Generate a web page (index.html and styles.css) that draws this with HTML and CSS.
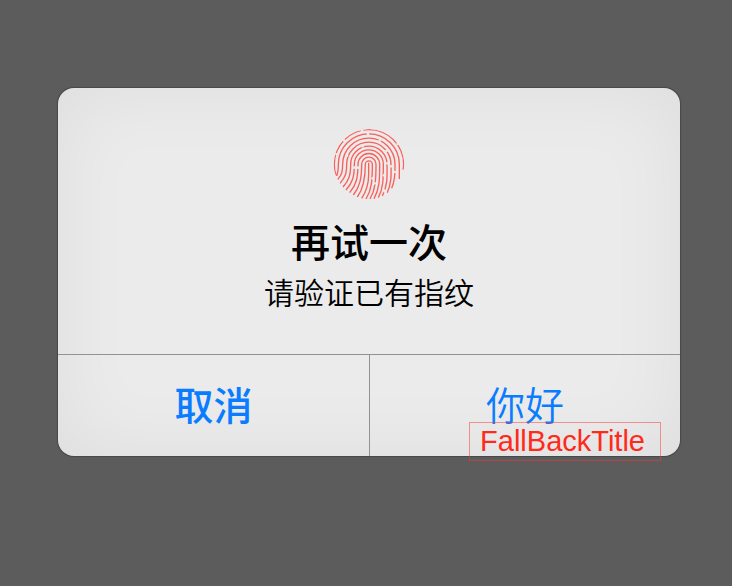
FILE: index.html
```html
<!DOCTYPE html>
<html lang="zh-CN">
<head>
<meta charset="utf-8">
<meta name="viewport" content="width=device-width, initial-scale=1">
<title>再试一次</title>
<link rel="stylesheet" href="styles.css">
</head>
<body>
<main class="dialog" role="alertdialog" aria-labelledby="title" aria-describedby="message">
  <section class="content">
    <svg class="fingerprint" viewBox="0 0 270 270" aria-hidden="true">
      <mask id="breaks" maskUnits="userSpaceOnUse" x="0" y="0" width="270" height="270">
        <circle cx="135" cy="133" r="106" fill="#fff"/>
        <g fill="#000">
          <circle cx="114" cy="31" r="4"/><circle cx="132" cy="42" r="4"/>
          <circle cx="60" cy="61" r="4"/><circle cx="38" cy="103" r="4"/>
          <circle cx="116" cy="79" r="4"/><circle cx="69" cy="107" r="4"/>
          <circle cx="167" cy="62" r="4"/><circle cx="221" cy="72" r="4"/>
          <circle cx="187" cy="93" r="4"/><circle cx="228" cy="104" r="4"/>
          <circle cx="190" cy="130" r="4"/><circle cx="201" cy="139" r="4"/>
          <circle cx="213" cy="156" r="4"/><circle cx="180" cy="166" r="4"/>
          <circle cx="146" cy="175" r="4"/><circle cx="152" cy="190" r="4"/>
          <circle cx="91" cy="143" r="4"/><circle cx="102" cy="143" r="4"/>
          <circle cx="182" cy="213" r="5"/>
        </g>
      </mask>
      <g mask="url(#breaks)" fill="none" stroke="#fb5f59" stroke-width="4">
        <path d="M37 167Q30 151 31 133A104 104 0 0 1 239 133Q239 142 237 149"/>
        <path d="M38 168Q43 155 43 133A91 91 0 0 1 226 133V177"/>
        <path d="M41 179C53 164 56 156 56 133A78 78 0 0 1 213 133C214 160 214 180 203 205"/>
        <path d="M48 190C64 171 68 161 68 133A66 66 0 0 1 201 133C202 168 202 190 190 218"/>
        <path d="M57 201C75 180 80 166 80 133A54 54 0 0 1 189 133C190 174 190 199 175 228"/>
        <path d="M66 210C86 188 91 170 91 133A43 43 0 0 1 178 133C178 178 178 204 163 233"/>
        <path d="M77 218C97 195 102 172 102 133A32 32 0 0 1 167 133C167 178 167 206 150 236"/>
        <path d="M88 225C108 200 113 174 113 133A21 21 0 0 1 156 133C156 178 155 207 138 237"/>
        <path d="M100 231C119 206 124 176 124 133A10 10 0 0 1 145 133C145 178 144 207 126 237"/>
        <path d="M134 128V163C134 188 129 212 113 235"/>
      </g>
    </svg>
    <h1 class="title" id="title">再试一次</h1>
    <p class="message" id="message">请验证已有指纹</p>
  </section>
  <div class="actions">
    <button class="action action-cancel" type="button">取消</button>
    <button class="action" type="button">你好</button>
  </div>
  <span class="annotation">FallBackTitle</span>
</main>
</body>
</html>
```
FILE: styles.css
```css
* {
  box-sizing: border-box;
}

body {
  margin: 0;
  min-height: 100vh;
  padding: 88px 52px 0 58px;
  background: #5c5c5c;
  color: #000;
  font-family: "Liberation Sans", "Noto Sans CJK SC", sans-serif;
}

.dialog {
  position: relative;
  border-radius: 16px;
  background: #ebebeb;
  box-shadow: inset 0 0 80px rgba(0, 0, 0, 0.06), 0 0 1px 1px #484848;
}

.content {
  display: flex;
  flex-direction: column;
  align-items: center;
  padding: 32px 0 40px;
}

.fingerprint {
  width: 90px;
  height: 90px;
}

.title {
  margin: 14px 0 0;
  font-size: 39px;
  line-height: 40px;
  font-weight: 500;
}

.message {
  margin: 10px 0 0;
  font-size: 30px;
  line-height: 40px;
  font-weight: 350;
}

.actions {
  display: grid;
  grid-template-columns: 1fr 1fr;
  border-top: 1px solid #929292;
}

.action {
  padding: 21px 0 19px;
  border: 0;
  background: none;
  color: #0a7cff;
  font: inherit;
  font-size: 39px;
  font-weight: 350;
  line-height: 61px;
}

.action + .action {
  border-left: 1px solid #929292;
}

.action-cancel {
  font-weight: 500;
}

.annotation {
  position: absolute;
  right: 19px;
  bottom: -5px;
  padding: 0 15px 0 10px;
  border: 1px solid rgba(255, 50, 50, 0.5);
  color: #ff2a1a;
  font-size: 29px;
  line-height: 37px;
}
```
